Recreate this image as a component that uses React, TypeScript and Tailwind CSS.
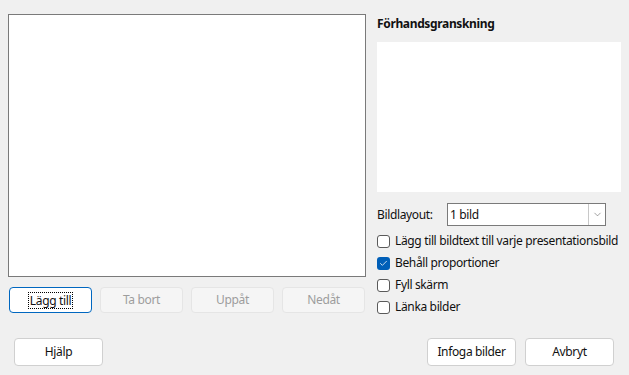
import { Check, ChevronDown } from "lucide-react";

const font = { fontFamily: '"Segoe UI", "Noto Sans", sans-serif', letterSpacing: "-0.35px" };

const Btn = ({
  label,
  disabled,
  focused,
  className,
}: {
  label: string;
  disabled?: boolean;
  focused?: boolean;
  className?: string;
}) => (
  <button
    className={
      "flex items-center justify-center rounded-[4px] border text-[12px] whitespace-nowrap " +
      (disabled
        ? "bg-[#f5f5f5] border-[#e5e5e5] text-[#9d9d9d] "
        : focused
          ? "bg-white border-[#0067c0] text-[#111] "
          : "bg-white border-[#d0d0d0] text-[#111] ") +
      (className ?? "")
    }
  >
    {focused ? (
      <span className="border border-dotted border-black px-[1px] leading-[15px]">{label}</span>
    ) : (
      label
    )}
  </button>
);

const CheckRow = ({ label, checked }: { label: string; checked?: boolean }) => (
  <div className="flex items-center h-[22px] gap-[5px]">
    {checked ? (
      <div className="w-[13px] h-[13px] shrink-0 rounded-[3px] bg-[#005fb8] flex items-center justify-center">
        <Check size={9} strokeWidth={2} color="white" />
      </div>
    ) : (
      <div className="w-[13px] h-[13px] shrink-0 rounded-[3px] border border-[#5a5a5a] bg-white" />
    )}
    <span className="text-[12px] text-[#111] whitespace-nowrap">{label}</span>
  </div>
);

const App = () => {
  return (
    <div className="w-[629px] h-[375px] bg-[#f0f0f0] flex flex-col" style={font}>
      <div className="flex flex-row">
        <div className="flex flex-col pl-[8px] pt-[14px] w-[369px]">
          <div className="w-[358px] h-[263px] bg-white border border-[#7a7a7a]" />
          <div className="flex flex-row gap-[8px] mt-[10px] pl-[1px]">
            <Btn label="Lägg till" focused className="w-[83px] h-[26px]" />
            <Btn label="Ta bort" disabled className="w-[83px] h-[26px]" />
            <Btn label="Uppåt" disabled className="w-[83px] h-[26px]" />
            <Btn label="Nedåt" disabled className="w-[83px] h-[26px]" />
          </div>
        </div>
        <div className="flex flex-col pl-[8px] w-[260px]">
          <div className="mt-[15px] h-[18px] text-[12px] font-bold text-[#111] leading-[18px]">
            Förhandsgranskning
          </div>
          <div className="mt-[9px] w-[244px] h-[150px] bg-white" />
          <div className="flex flex-row items-center mt-[11px] h-[23px]">
            <span className="text-[12px] text-[#111] w-[70px]">Bildlayout:</span>
            <div className="flex flex-row w-[159px] h-[23px] bg-white border border-[#7a7a7a]">
              <span className="flex-1 text-[12px] text-[#111] pl-[2px] leading-[21px]">1 bild</span>
              <div className="w-[17px] h-full border-l border-[#c8c8c8] flex items-center justify-center">
                <ChevronDown size={11} strokeWidth={1.2} color="#555" />
              </div>
            </div>
          </div>
          <div className="flex flex-col mt-[4px]">
            <CheckRow label="Lägg till bildtext till varje presentationsbild" />
            <CheckRow label="Behåll proportioner" checked />
            <CheckRow label="Fyll skärm" />
            <CheckRow label="Länka bilder" />
          </div>
        </div>
      </div>
      <div className="flex flex-row mt-[20px] pl-[14px]">
        <Btn label="Hjälp" className="w-[89px] h-[28px]" />
        <div className="flex flex-row gap-[9px] ml-[324px]">
          <Btn label="Infoga bilder" className="w-[89px] h-[28px]" />
          <Btn label="Avbryt" className="w-[89px] h-[28px]" />
        </div>
      </div>
    </div>
  );
};

export default App;
